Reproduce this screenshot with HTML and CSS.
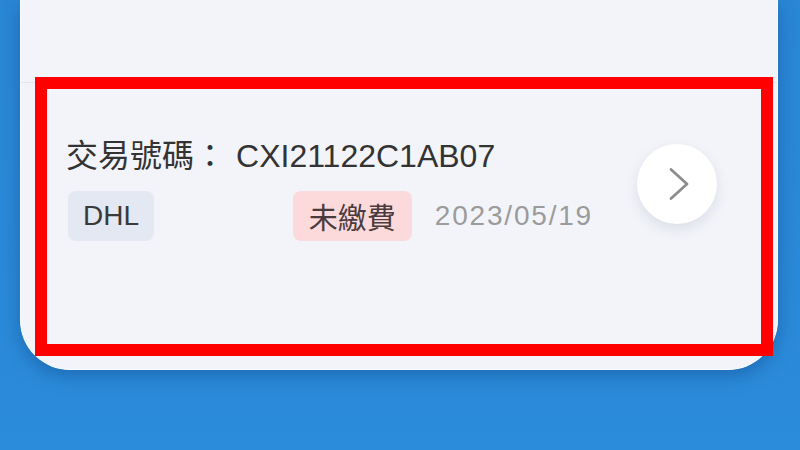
FILE: index.html
```html
<!DOCTYPE html>
<html lang="zh-Hant">
<head>
<meta charset="utf-8">
<title>交易</title>
<link rel="stylesheet" href="styles.css">
</head>
<body>
<div class="page">
  <div class="card">
    <div class="card-top"></div>
    <div class="item">
      <div class="info">
        <div class="title">交易號碼<span class="colon">：</span>CXI21122C1AB07</div>
        <div class="meta">
          <span class="tag tag-carrier">DHL</span>
          <div class="meta-right">
            <span class="tag tag-unpaid">未繳費</span>
            <span class="date">2023/05/19</span>
          </div>
        </div>
      </div>
      <button class="go" type="button" aria-label="查看">
        <svg width="22" height="34" viewBox="0 0 22 34"><polyline points="3,2.5 19,17 3,31.5" fill="none" stroke="#8c8c8c" stroke-width="2.8" stroke-linecap="round" stroke-linejoin="round"/></svg>
      </button>
    </div>
  </div>
  <div class="highlight"></div>
</div>
</body>
</html>
```
FILE: styles.css
```css
* { box-sizing: border-box; }
html, body { margin: 0; padding: 0; }
body {
  width: 800px;
  height: 450px;
  overflow: hidden;
  background: linear-gradient(180deg, #2a87d6 0%, #2a89d8 60%, #2b8cdb 100%);
  font-family: "Liberation Sans", "Noto Sans CJK TC", sans-serif;
  color: #333;
}
.page {
  position: relative;
  width: 800px;
  height: 450px;
  padding: 0 22px 0 20px;
}
.card {
  height: 370px;
  background: #f3f4f9;
  border: 1.5px solid #fbfcff;
  border-top: none;
  border-radius: 0 0 50px 50px;
  box-shadow: 0 6px 18px rgba(10, 50, 110, 0.35);
  display: flex;
  flex-direction: column;
}
.card-top {
  height: 83px;
  border-bottom: 1px solid #e3e5eb;
}
.item {
  display: flex;
  align-items: flex-start;
  padding: 53px 60px 0 45px;
  gap: 44px;
}
.info {
  width: 527px;
  display: flex;
  flex-direction: column;
  gap: 15px;
}
.title {
  font-size: 32px;
  line-height: 40px;
  color: #333;
  white-space: nowrap;
}
.colon {
  margin-right: 10px;
}
.meta {
  display: flex;
  justify-content: space-between;
  align-items: center;
}
.meta-right {
  display: flex;
  align-items: center;
  gap: 23px;
}
.tag {
  display: inline-flex;
  align-items: center;
  height: 50px;
  padding: 0 15px;
  border-radius: 8px;
  font-size: 28px;
  margin-left: 2px;
}
.tag-carrier { background: #e4e8f2; color: #3a3a3a; }
.tag-unpaid { background: #fcd9da; color: #4a3c3e; font-size: 29px; padding: 0 16px; }
.date {
  font-size: 28px;
  color: #9b9b9b;
  letter-spacing: 1.8px;
}
.go {
  margin-top: 8px;
  width: 80px;
  height: 80px;
  border: none;
  border-radius: 50%;
  background: #ffffff;
  box-shadow: 0 5px 14px rgba(20, 40, 90, 0.10);
  display: flex;
  align-items: center;
  justify-content: center;
  padding: 0 0 0 4px;
  flex: none;
}
.highlight {
  position: absolute;
  left: 35px;
  top: 77px;
  width: 738px;
  height: 279px;
  border: 12px solid #ff0000;
  pointer-events: none;
}
```
